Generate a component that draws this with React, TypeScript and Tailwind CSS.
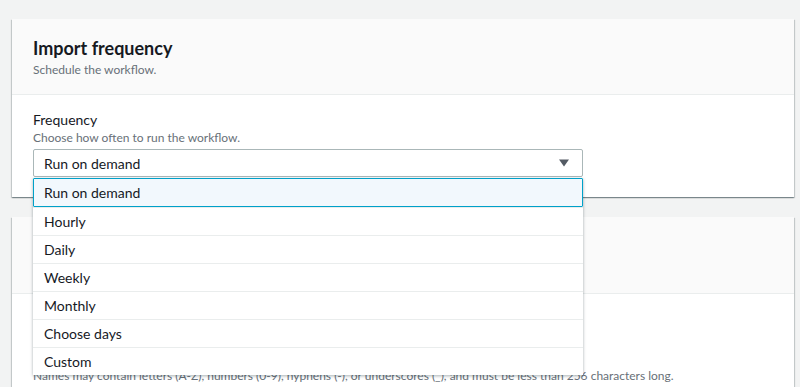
const options = ["Run on demand", "Hourly", "Daily", "Weekly", "Monthly", "Choose days", "Custom"];

function Caret() {
  return (
    <svg width="10" height="8" viewBox="0 0 10 8" className="text-[#545b64]">
      <path d="M0 0.5 H10 L5 7.5 Z" fill="currentColor" />
    </svg>
  );
}

const card =
  "bg-white shadow-[0_1px_1px_0_rgba(0,28,36,0.3),1px_1px_1px_0_rgba(0,28,36,0.15),-1px_1px_1px_0_rgba(0,28,36,0.15)]";

export default function App() {
  return (
    <div
      className="h-[387px] overflow-hidden bg-[#f2f3f3] pt-[19px] pl-[12px] pr-[6px] text-[#16191f]"
      style={{ fontFamily: 'Lato, "Noto Sans", sans-serif' }}
    >
      <div className={card}>
        <div className="bg-[#fafafa] border-b border-[#eaeded] px-[21px] pt-[17px] pb-[16px]">
          <h2 className="text-[18px] leading-[24px] font-bold">Import frequency</h2>
          <p className="text-[12px] leading-[16px] text-[#687078] mt-[2px]">Schedule the workflow.</p>
        </div>
        <div className="px-[21px] pt-[16px] pb-[20px]">
          <div className="text-[14px] leading-[18px]">Frequency</div>
          <div className="text-[12px] leading-[16px] text-[#687078] mt-[1px]">Choose how often to run the workflow.</div>
          <div className="relative w-[550px] mt-[3px]">
            <div className="h-[28px] flex items-center justify-between border border-[#aab7b8] rounded-[2px] pl-[10px] pr-[13px] text-[14px]">
              <span>Run on demand</span>
              <Caret />
            </div>
            {/* open dropdown, lies over the next card */}
            <ul className="absolute z-10 left-0 right-0 top-[29px] bg-white shadow-[0_1px_3px_0_rgba(0,28,36,0.35)] text-[14px]">
              {options.map((o, i) => (
                <li
                  key={o}
                  className={
                    i === 0
                      ? "h-[29px] flex items-center pl-[10px] bg-[#f2f8fd] border border-[#00a1c9] rounded-[1px]"
                      : "h-[28px] flex items-center pl-[11px] border-t border-[#eaeded]"
                  }
                >
                  {o}
                </li>
              ))}
            </ul>
          </div>
        </div>
      </div>

      <div className={"mt-[20px] " + card}>
        <div className="h-[77px] bg-[#fafafa] border-b border-[#eaeded]" />
        <div className="px-[21px] pt-[74px] pb-[20px]">
          <div className="text-[12px] leading-[16px] text-[#687078]">
            Names may contain letters (A-Z), numbers (0-9), hyphens (-), or underscores (_), and must be less than 256 characters long.
          </div>
        </div>
      </div>
    </div>
  );
}
